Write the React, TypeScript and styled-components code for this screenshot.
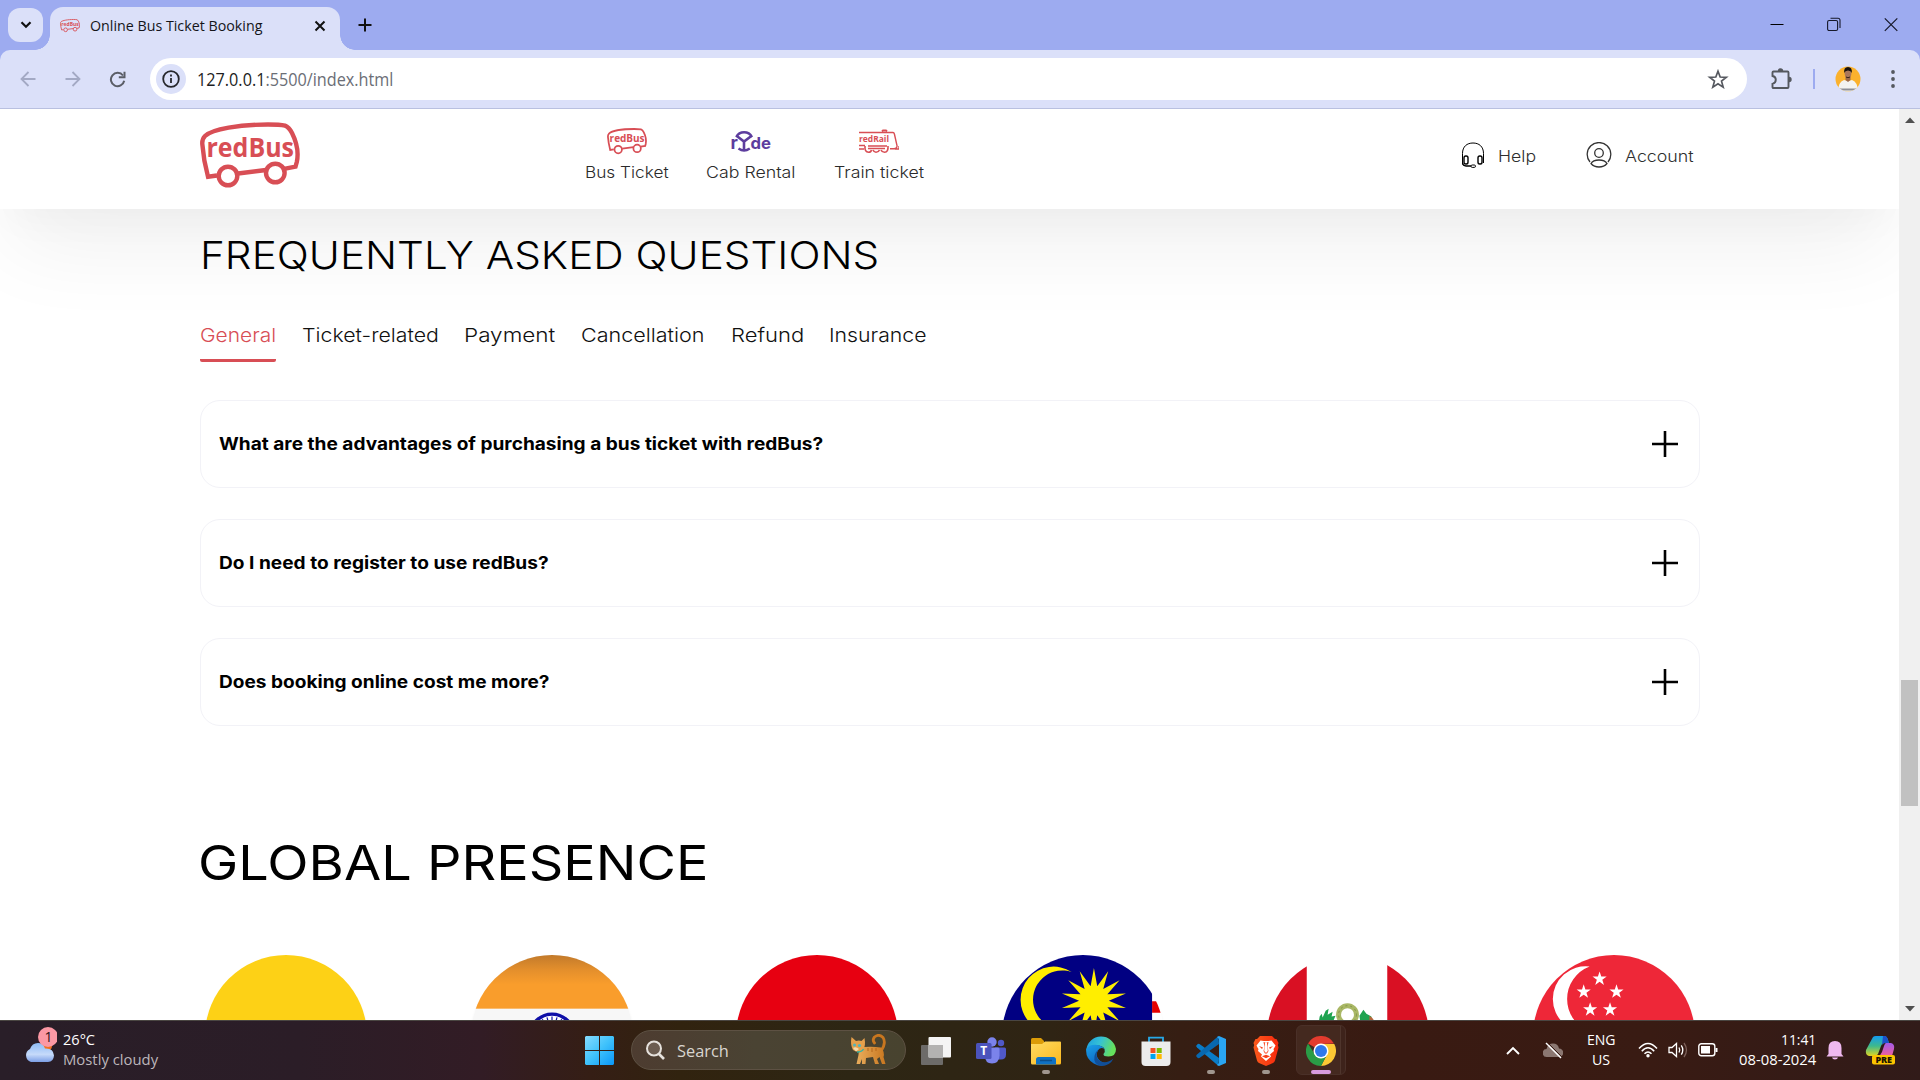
import React, { useLayoutEffect, useRef, useState } from "react";
import styled, { createGlobalStyle } from "styled-components";

const RED = "#d84e55";
const PAGE_FONT = `Inter, "Open Sans", sans-serif`;
const UI_FONT = `"Segoe UI", "Open Sans", "Noto Sans", sans-serif`;

const Global = createGlobalStyle`
  * { box-sizing: border-box; }
  html, body { margin: 0; padding: 0; background: #fff; overflow: hidden; }
  svg { display: block; flex: none; }
`;

/* ---------- fitted text ---------- */

const FitBox = styled.span<{ $w: number }>`
  display: block;
  width: ${(p) => p.$w}px;
  white-space: nowrap;
  flex: none;
`;
const FitInner = styled.span`
  display: inline-block;
  transform-origin: 0 50%;
  vertical-align: top;
`;

function Fit({ w, children }: { w: number; children: React.ReactNode }) {
  const ref = useRef<HTMLSpanElement>(null);
  const [k, setK] = useState(1);
  useLayoutEffect(() => {
    if (ref.current) setK(w / ref.current.offsetWidth);
  }, [w]);
  return (
    <FitBox $w={w}>
      <FitInner ref={ref} style={{ transform: `scaleX(${k})` }}>{children}</FitInner>
    </FitBox>
  );
}

/* ---------- window ---------- */

const Screen = styled.div`
  width: 1920px;
  height: 1080px;
  overflow: hidden;
  display: flex;
  flex-direction: column;
  font-family: ${UI_FONT};
  background: #fff;
`;

const TabStrip = styled.div`
  height: 50px;
  flex: none;
  background: #9dabf0;
  display: flex;
  align-items: flex-start;
  padding-left: 8px;
`;
const TabSearch = styled.div`
  width: 35px;
  height: 34px;
  margin: 8px 7px 0 0;
  border-radius: 12px;
  background: #dbe0f9;
  display: grid;
  place-items: center;
`;
const Tab = styled.div`
  position: relative;
  width: 290px;
  height: 43px;
  margin-top: 7px;
  border-radius: 13px 13px 0 0;
  background: #dbe0f9;
  display: flex;
  align-items: center;
  padding: 0 13px 6px 10px;
  font-size: 15px;
  line-height: 20px;
  color: #14151a;
  &::before, &::after {
    content: "";
    position: absolute;
    bottom: 0;
    width: 15px;
    height: 15px;
  }
  &::before { left: -15px; background: radial-gradient(circle at 0 0, transparent 14.5px, #dbe0f9 15px); }
  &::after { right: -15px; background: radial-gradient(circle at 100% 0, transparent 14.5px, #dbe0f9 15px); }
`;
const TabTitle = styled.div`
  margin: -1px 0 0 10px;
  flex: 1;
`;
const NewTab = styled.div`
  margin: 18px 0 0 18px;
  height: 14px;
`;
const WindowButtons = styled.div`
  margin-left: auto;
  display: flex;
  gap: 43px;
  padding: 17px 22px 0 0;
`;

const ToolbarBack = styled.div`
  height: 59px;
  flex: none;
  background: #9dabf0;
`;
const Toolbar = styled.div`
  height: 59px;
  border-radius: 10px 10px 0 0;
  background: #dbe0f9;
  border-bottom: 1px solid #b9c0e0;
  display: flex;
  align-items: center;
  padding: 0 20px;
`;
const NavButtons = styled.div`
  display: flex;
  gap: 28.5px;
  width: 130px;
  flex: none;
`;
const Omnibox = styled.div`
  width: 1597px;
  height: 42px;
  border-radius: 21px;
  background: #fff;
  display: flex;
  align-items: center;
  padding: 0 18px 0 6px;
`;
const SiteInfo = styled.div`
  width: 30px;
  height: 30px;
  border-radius: 50%;
  background: #dbe0f9;
  display: grid;
  place-items: center;
`;
const Url = styled.div`
  flex: 1;
  margin-left: 11px;
  font-size: 18px;
  line-height: 24px;
  color: #6b6e76;
  b { font-weight: 400; color: #1c1d22; }
`;
const ToolbarRight = styled.div`
  display: flex;
  align-items: center;
  margin-left: 24px;
`;
const Divider = styled.div`
  width: 2px;
  height: 20px;
  background: #9dabf0;
  margin: 0 20px;
`;
const MenuDots = styled.div`
  margin-left: 30px;
`;

/* ---------- page ---------- */

const Viewport = styled.div`
  height: 911px;
  flex: none;
  display: flex;
`;
const Page = styled.div`
  width: 1899px;
  height: 911px;
  overflow: hidden;
  font-family: ${PAGE_FONT};
  color: #000;
`;
const Header = styled.header`
  height: 100px;
  padding: 0 200px;
  background: #fff;
  display: flex;
  align-items: flex-start;
  box-shadow: 0 42px 90px -10px rgba(0, 0, 0, 0.07), 0 20px 40px -10px rgba(0, 0, 0, 0.03);
`;
const LogoSlot = styled.div`
  width: 384.5px;
  padding-top: 13px;
`;
const Services = styled.nav`
  display: flex;
  gap: 37.5px;
  padding-top: 18px;
`;
const Service = styled.div`
  display: flex;
  flex-direction: column;
  align-items: center;
  font-size: 15.6px;
  font-weight: 300;
  line-height: 20px;
  color: #2a2a2a;
`;
const ServiceIcon = styled.div`
  height: 35.5px;
  width: 40px;
  padding-top: 1px;
`;
const Links = styled.div`
  margin-left: auto;
  display: flex;
  padding: 33px 5.5px 0 0;
  gap: 49.5px;
`;
const LinkItem = styled.div`
  display: flex;
  align-items: center;
  gap: 13px;
  font-size: 15.6px;
  font-weight: 300;
  line-height: 26px;
  color: #2e2e2e;
`;
const LinkLabel = styled.div`
  padding-top: 2px;
  height: 26px;
`;

const Faq = styled.section`
  padding: 21px 199px 0 200px;
`;
const FaqTitle = styled.h1`
  margin: 0;
  font-size: 38.5px;
  line-height: 50px;
  font-weight: 300;
`;
const FaqTabs = styled.div`
  display: flex;
  gap: 25.7px;
  margin-top: 44px;
`;
const FaqTab = styled.div<{ $active?: boolean }>`
  height: 38px;
  font-size: 19.3px;
  font-weight: 300;
  line-height: 22px;
  color: ${(p) => (p.$active ? RED : "#111")};
  background: linear-gradient(${RED}, ${RED}) left bottom / ${(p) => (p.$active ? "100% 3px" : "0 0")} no-repeat;
  border-radius: 2px;
`;
const Cards = styled.div`
  display: flex;
  flex-direction: column;
  gap: 31px;
  margin-top: 38px;
`;
const Card = styled.div`
  height: 88px;
  border: 1px solid #f2f2f7;
  border-radius: 20px;
  display: flex;
  align-items: center;
  justify-content: space-between;
  padding: 0 21px 0 18px;
  font-size: 17.3px;
  font-weight: 650;
  line-height: 24px;
`;
const Presence = styled.section`
  padding: 112px 199px 0 200px;
`;
const PresenceTitle = styled.h2`
  margin: 0 0 0 -2px;
  font-size: 48.5px;
  line-height: 50px;
  font-weight: 420;
`;
const Flags = styled.div`
  display: flex;
  justify-content: space-between;
  margin-top: 67px;
  padding: 0 5px;
`;

const ScrollTrack = styled.div`
  width: 21px;
  height: 911px;
  background: #f0f0f0;
  display: flex;
  flex-direction: column;
  align-items: center;
  padding: 8px 0 8px;
`;
const ScrollThumb = styled.div`
  width: 17px;
  height: 126px;
  margin: 557px 0 auto;
  background: #c1c1c1;
`;

/* ---------- taskbar ---------- */

const Taskbar = styled.footer`
  height: 60px;
  flex: none;
  border-top: 1px solid #4a4642;
  background: linear-gradient(90deg, #291e28 0, #2b1d27 300px, #321c25 480px, #351e15 590px, #31230f 680px, #2d2614 850px, #2f2414 1050px, #361e13 1180px, #391a12 1400px, #391b13 1650px, #311b19 1920px);
  display: flex;
  color: #fff;
  font-family: ${UI_FONT};
`;
const Weather = styled.div`
  width: 585px;
  padding: 3px 0 0 23px;
  display: flex;
  gap: 6px;
  font-size: 15px;
  line-height: 20px;
`;
const WeatherText = styled.div`
  padding-top: 5px;
  div:last-child { color: #bdb6bb; }
`;
const StartSlot = styled.div`
  width: 46px;
  padding-top: 15px;
`;
const SearchBox = styled.div`
  width: 275px;
  height: 40px;
  margin: 9px 2.5px 0 0;
  border-radius: 20px;
  border: 1px solid #5d5143;
  background: linear-gradient(90deg, #4d3c30, #4a4333 45%, #48432f);
  display: flex;
  align-items: center;
  padding: 0 19px 0 13px;
  font-size: 17px;
  line-height: 22px;
  color: #d9d5cf;
`;
const SearchLabel = styled.div`
  flex: 1;
  margin-left: 12px;
  padding-top: 1px;
`;
const Apps = styled.div`
  display: flex;
`;
const AppCell = styled.div<{ $active?: boolean }>`
  width: 50px;
  height: 50px;
  margin: 4px 2.5px 0;
  padding-top: 10px;
  border-radius: 6px;
  border: 1px solid ${(p) => (p.$active ? "#4a3028" : "transparent")};
  background: ${(p) => (p.$active ? "linear-gradient(90deg, #44291f 43px, #4f352c 43px, #4f352c 44px, #3e231b 44px)" : "transparent")};
  display: flex;
  flex-direction: column;
  align-items: center;
`;
const Dot = styled.div<{ $active?: boolean }>`
  width: ${(p) => (p.$active ? 20 : 8)}px;
  height: 4px;
  margin-top: 4px;
  border-radius: 2px;
  background: ${(p) => (p.$active ? "#d89bdd" : "#a0968e")};
`;
const Tray = styled.div`
  margin-left: auto;
  display: grid;
  grid-template-columns: 48px 32px 64px 30px 29px 32px 92px 38px 52px 14px;
  align-items: center;
  justify-items: center;
  font-size: 15px;
  line-height: 20px;
  height: 58px;
`;
const Stack = styled.div`
  display: flex;
  flex-direction: column;
  align-items: center;
  margin-top: -2px;
`;
const Clock = styled.div`
  display: flex;
  flex-direction: column;
  align-items: flex-end;
  justify-self: end;
  margin-top: -2px;
`;

/* ---------- drawings ---------- */

const BusSvg = styled.svg`
  overflow: visible;
`;

const BusLogo = ({ width }: { width: number }) => (
  <BusSvg width={width} height={width * 0.66} viewBox="0 0 100 66" fill="none" stroke={RED} strokeWidth="4.4">
    <path d="M17 53.5 L8 54.8 Q3.5 38 2.3 22 Q2 17 5 14 C12 7 40 2.5 68 2.5 Q80 2.5 85 3.6 Q89 5 92 11 C97.500 22 98.500 32 96.800 40 L95.500 44.700 L84 46.800" />
    <path d="M38 51.500 L66 48" />
    <circle cx="28" cy="54" r="9.300" />
    <circle cx="75.300" cy="51" r="9.300" />
    <text x="6.500" y="35.200" fontSize="27.500" fontWeight="700" fill={RED} stroke="none" textLength="87.500" lengthAdjust="spacingAndGlyphs" fontFamily="Open Sans, sans-serif">redBus</text>
  </BusSvg>
);

const RydeLogo = () => (
  <svg width="40" height="26" viewBox="0 -3 40 26" fill="none" stroke="#5d3d9e" strokeWidth="2.400">
    <text x="-0.500" y="18" fontSize="18" fontWeight="700" fill="#5d3d9e" stroke="none" fontFamily="Inter, sans-serif">r</text>
    <path d="M5.200 6 A9 9 0 0 1 21 6" />
    <path d="M5.500 4.800 L13 10.500 L20.700 4.800 M13 10 V19" strokeWidth="2.600" />
    <path d="M7.500 17.500 Q13 21.500 18.800 17.500" />
    <text x="19.500" y="18" fontSize="16" fontWeight="700" fill="#5d3d9e" stroke="none" fontFamily="Inter, sans-serif" textLength="20.500" lengthAdjust="spacingAndGlyphs">de</text>
  </svg>
);

const RailLogo = () => (
  <svg width="40" height="26" viewBox="0 -2 40 26" fill="none" stroke={RED} strokeWidth="1.400">
    <path d="M0 2.500 H34 Q35 2.500 35.400 4 L38 15.500 Q38.300 18.500 35 18.800 H31 M40 16 V19 H36" />
    <path d="M23 1.500 L24 .5 H27 L28 1.500" strokeWidth="1.800" />
    <text x="0" y="12" fontSize="8" fontWeight="700" fill={RED} stroke="none" textLength="30" lengthAdjust="spacingAndGlyphs" fontFamily="Open Sans, sans-serif">redRail</text>
    <path d="M0 15.500 H6 M9 16 H28 M0 19 H5 M9 18.500 H26" />
    <path d="M6 16 Q5.500 22.300 9.500 22.300 Q12 22.300 12.500 20 M14 20 Q15 22.300 17 22.300 Q19.500 22.300 20.500 20 M22 20 Q23 22.300 25.500 22.300 Q29.500 22 29 16" strokeWidth="1.600" />
  </svg>
);

const HelpIcon = () => (
  <svg width="24" height="26" viewBox="0 0 24 26" fill="none" stroke="#000" strokeWidth="1">
    <path d="M1.500 22.500 V11.500 C1.500 4.500 6 1 12 1 C18 1 22.500 4.500 22.500 11.500 V21" />
    <rect x="3" y="14" width="4" height="8" rx="1.800" strokeWidth="1.400" />
    <rect x="17" y="14" width="4" height="8" rx="1.800" strokeWidth="1.400" />
    <path d="M1.500 21 Q2 24 5 24 H10" strokeWidth="1.300" />
    <rect x="10" y="23" width="4.500" height="2.400" rx="1.200" />
  </svg>
);

const AccountIcon = () => (
  <svg width="26" height="26" viewBox="0 0 26 26" fill="none" stroke="#333" strokeWidth="1.300">
    <path d="M4 20 A11.800 11.800 0 1 1 22 20" />
    <circle cx="13" cy="11" r="4.300" />
    <path d="M5 21.500 Q7 18 13 18 Q19 18 21 21.500 Q18 25 13 25 Q8 25 5 21.500Z" />
  </svg>
);

const PlusIcon = () => (
  <svg width="26" height="26" viewBox="0 0 26 26" stroke="#000" strokeWidth="2.600"><path d="M13 0V26M0 13H26" /></svg>
);

const star = (cx: number, cy: number, R: number, r: number, n: number) =>
  Array.from({ length: n * 2 }, (_, i) => {
    const a = (Math.PI * i) / n - Math.PI / 2;
    const q = i % 2 ? r : R;
    return `${(cx + q * Math.cos(a)).toFixed(2)},${(cy + q * Math.sin(a)).toFixed(2)}`;
  }).join(" ");

const FlagSvg = styled.svg`
  width: 162px;
  height: 162px;
  border-radius: 50%;
  overflow: hidden;
  box-shadow: 0 4px 3px rgba(0, 0, 0, 0.1);
`;

const FlagArt: React.ReactNode[] = [
  <>
    <rect width="163" height="82" fill="#fdd116" />
    <rect y="82" width="163" height="41" fill="#003893" />
    <rect y="123" width="163" height="40" fill="#ce1126" />
  </>,
  <>
    <defs>
      <linearGradient id="saffron" x2="0" y2="1">
        <stop offset="0" stopColor="#c27a2b" />
        <stop offset=".28" stopColor="#e48f2c" />
        <stop offset=".55" stopColor="#f99d2c" />
      </linearGradient>
    </defs>
    <rect width="163" height="163" fill="#f7f7f7" />
    <rect width="163" height="54" fill="url(#saffron)" />
    <rect y="109" width="163" height="54" fill="#128807" />
    <circle cx="81.500" cy="81.500" r="22" fill="#fff" stroke="#1010a8" strokeWidth="3.500" />
    {Array.from({ length: 24 }, (_, i) => (
      <path key={i} d="M81.500 81.500V62" stroke="#1010a8" strokeWidth="1.200" transform={`rotate(${i * 15} 81.500 81.500)`} />
    ))}
  </>,
  <>
    <rect width="163" height="82" fill="#e70011" />
    <rect y="82" width="163" height="81" fill="#fff" />
  </>,
  <>
    <rect width="163" height="163" fill="#fff" />
    <path d="M151 46.500h13v11.500h-13z" fill="#e60000" />
    <rect width="151" height="93" fill="#010082" />
    <path d="M70 17 A33.300 33.300 0 1 0 70 73 A29.500 29.500 0 1 1 70 17Z" fill="#ffee00" />
    <polygon points={star(92.500, 46, 33, 15, 14)} fill="#ffee00" />
  </>,
  <>
    <rect width="163" height="163" fill="#fff" />
    <rect width="40" height="163" fill="#d91023" />
    <rect x="121" width="42" height="163" fill="#d91023" />
    <circle cx="81" cy="60" r="9" fill="none" stroke="#a9b765" strokeWidth="5" />
    <circle cx="81" cy="60" r="9" fill="none" stroke="#7f9146" strokeWidth="1" strokeDasharray="2 3" />
    <path d="M52 68l1-6 2-3 1 4 3-7 3-2-1 6 5-3-1 5 4-1-3 7z M94 68l-1-7 4-6 3 4 5 3 1 6z" fill="#1fa350" />
    <path d="M103 61q5 3 5 7h-5z M73 68h16v4H73z" fill="#b5653c" />
  </>,
  <>
    <rect width="163" height="82" fill="#ee2738" />
    <rect y="82" width="163" height="81" fill="#fff" />
    <path d="M57 11.500 A33 33 0 1 0 57 77 A35 35 0 0 1 57 11.500Z" fill="#fff" />
    {[[67, 24], [51, 37], [84, 37], [57.500, 55], [77.500, 55]].map(([x, y]) => (
      <polygon key={`${x}-${y}`} points={star(x, y, 7.500, 2.900, 5)} fill="#fff" />
    ))}
  </>,
];

const Avatar = () => (
  <svg width="26" height="26" viewBox="0 0 26 26">
    <defs><clipPath id="av"><circle cx="13" cy="13" r="12.500" /></clipPath></defs>
    <g clipPath="url(#av)">
      <rect width="26" height="26" fill="#fbb12d" />
      <path d="M3 26 Q3 16 9 14 L13 15 L17 14 Q23 16 23 26Z" fill="#f3f3f1" />
      <path d="M10.500 10h5v4l-2.500 2-2.500-2z" fill="#9b6a4a" />
      <ellipse cx="13" cy="7.500" rx="3.400" ry="4.800" fill="#a9775a" />
      <path d="M9.200 7Q8.500 1 13 1Q17.500 1 16.800 7Q16 4.500 13 4.500Q10 4.500 9.200 7Z" fill="#17120f" />
      <path d="M11 10.200Q13 12.500 15 10.200L14.500 12h-3z" fill="#2c1b14" />
      <path d="M4 22.500h18v2H5z" fill="#8d8f97" />
    </g>
  </svg>
);

const Cat = () => (
  <svg width="36" height="32" viewBox="0 0 36 32">
    <defs><linearGradient id="cat" x2="1" y2="0"><stop offset="0" stopColor="#e9ad5c" /><stop offset="1" stopColor="#c8761f" /></linearGradient></defs>
    <path d="M31 17 Q36.500 9 33 3.500 Q29 -.5 24.500 3 Q22 6 24.500 9" fill="none" stroke="#c8761f" strokeWidth="2.800" strokeLinecap="round" />
    <path d="M9 14 Q18 12 31 13.500 Q35 18 33.500 23 L35.500 30 H32 L29.500 23 L27 25 L29 30 H25 L23 23 L16 24 L15.500 30 H12 L12 25 L10 30 H6.500 L8.500 21Z" fill="url(#cat)" />
    <path d="M1.500 3 L6 7 Q9 6 11.500 7 L14.500 4 Q16 12 13 16 Q8 19.500 3 16 Q0 11 1.500 3Z" fill="#e5a04c" />
    <path d="M3 14 Q6 12 9 15 L6 17.500Z" fill="#f6dcae" />
    <circle cx="4.500" cy="11" r="1.500" fill="#4fb5bf" /><circle cx="9.500" cy="11.500" r="1.600" fill="#4fb5bf" />
    <path d="M7 18 Q12 18 13.500 15" stroke="#2fb3a5" strokeWidth="1.500" fill="none" />
    <path d="M18 14v3M22 14v4M26 14v3" stroke="#b5661a" />
  </svg>
);

const S = ({ children }: { children: React.ReactNode }) => <svg width="30" height="30" viewBox="0 0 30 30">{children}</svg>;

const StartIcon = () => (
  <svg width="29" height="29" viewBox="0 0 29 29">
    <defs><linearGradient id="win" x2="1" y2="1"><stop offset="0" stopColor="#86dcff" /><stop offset=".5" stopColor="#3fc2fb" /><stop offset="1" stopColor="#0a96f8" /></linearGradient></defs>
    <path d="M1 0h13v14H0V1zM15 0h13l1 1v13H15zM0 15h14v14H1l-1-1zM15 15h14v13l-1 1H15z" fill="url(#win)" />
  </svg>
);

const TaskView = () => (
  <S>
    <rect x="0" y="9" width="22" height="20" rx="1" fill="#6d6b69" />
    <rect x="7.500" y="1" width="22.500" height="20.500" rx="1" fill="#f4f4f4" />
    <path d="M7.500 9H22v12.500H7.500z" fill="#b3b2b1" />
  </S>
);
const Teams = () => (
  <S>
    <circle cx="25" cy="7" r="3.200" fill="#5059c9" />
    <path d="M19 11.500h9.500q1.500 0 1.500 1.500v5.500q0 5-5 5h-5z" fill="#5059c9" />
    <circle cx="16" cy="6" r="4.700" fill="#7b83eb" />
    <path d="M9 11.500h13q1.500 0 1.500 1.500v6.500Q23 27.500 16 27.500T9 20z" fill="#7b83eb" />
    <rect x="0" y="7" width="15.500" height="16" rx="1.500" fill="#4b53bc" />
    <text x="7.700" y="19" fontSize="12" fontWeight="700" fill="#fff" textAnchor="middle" fontFamily="Open Sans, sans-serif">T</text>
  </S>
);
const Folder = () => (
  <S>
    <path d="M0 3.500Q0 2 1.500 2H10l3 3v5H0z" fill="#dc9c08" />
    <defs><linearGradient id="fold" x2="1" y2="1"><stop offset="0" stopColor="#ffdb63" /><stop offset="1" stopColor="#fcb91e" /></linearGradient></defs>
    <path d="M0 8h11l3-2.500h15q1 0 1 1V27q0 1.500-1.500 1.500h-27Q0 28.500 0 27z" fill="url(#fold)" />
    <path d="M5 28.500V23.500Q5 21 7.500 21h15Q25 21 25 23.500v5z" fill="#0f72c4" />
    <path d="M9 24.500h12" stroke="#0b4f8d" strokeWidth="1.500" />
  </S>
);
const Edge = () => (
  <S>
    <defs>
      <linearGradient id="eg" x2="1" y2=".3"><stop offset="0" stopColor="#1b9de2" /><stop offset=".5" stopColor="#35c1d5" /><stop offset="1" stopColor="#66e05c" /></linearGradient>
      <linearGradient id="eb" x2=".6" y2="1"><stop offset="0" stopColor="#1aa0e8" /><stop offset="1" stopColor="#0c62c0" /></linearGradient>
    </defs>
    <path d="M.3 14A15 15 0 0 1 30 13q0 7.500-7.500 7.500Q17 20.500 17.500 18q2-2 1-5Q17 9.500 11 9.500 4 9.500.3 14Z" fill="url(#eg)" />
    <path d="M.2 13Q3 8.500 9.500 8.700 16 9 18.500 13 14 10.500 11.500 15 9 21 15 25.500 19 28 24 26.500A15 15 0 0 1 .2 13Z" fill="url(#eb)" />
    <path d="M12.300 14Q8 21 14 25q6 3.500 13.500-2.500Q24 30 15 30 7 28 8.500 20q1-4.500 3.800-6Z" fill="#114f98" />
  </S>
);
const Store = () => (
  <S>
    <path d="M8 7V1.700h14V7" fill="none" stroke="#27a9e8" strokeWidth="1.800" />
    <path d="M.5 5.500h29V26q0 4-4 4h-21q-4 0-4-4z" fill="#ececec" />
    <path d="M9.500 12h5v5h-5z" fill="#f25022" /><path d="M15.700 12h5v5h-5z" fill="#7fba00" />
    <path d="M9.500 18h5v5h-5z" fill="#00a4ef" /><path d="M15.700 18h5v5h-5z" fill="#ffb900" />
  </S>
);
const Code = () => (
  <S>
    <path d="M22.500 30 L1 11.500 0 10 2 7.800 3.500 8 23 22z" fill="#0a7cc7" />
    <path d="M22.500 0 L1 18.500 0 20 2 22.200 3.500 22 23 8z" fill="#0868b0" />
    <path d="M21 1 L23 0 30 3V27L23 30 21 29 23 27V3z" fill="#2aa5f2" />
  </S>
);
const Brave = () => (
  <S>
    <defs><linearGradient id="br" x2="1" y2="0"><stop offset="0" stopColor="#fb5a1c" /><stop offset="1" stopColor="#f8290d" /></linearGradient></defs>
    <path d="M9 0h12l3 3h1.500l2 4-.7 2 .7 2.500-3.500 13q-.5 1.500-2 2.500L15 30l-7-3q-1.500-1-2-2.500L2.500 11.500 3.200 9l-.7-2 2-4H6z" fill="url(#br)" />
    <path d="M9.500 4.500l3 .5h5l3-.5 4 5-1 2-1 1.500.5 2-4 3.500 1 2-5 4.500-5-4.500 1-2-4-3.500.5-2-1-1.500-1-2z" fill="#fff" />
    <path d="M8 10l4 1.500-1 1.500zM22 10l-4 1.500 1 1.500zM12.500 6l1 5-1 4 1.500 2.500h2l1.500-2.500-1-4 1-5-2.500.7zM11 20.300l4-1.500 4 1.500-4 2z" fill="#f9401a" />
    <path d="M14 6.500h2l.8 8.500-1.800 2-1.800-2z" fill="#fff" />
  </S>
);
const Chrome = () => (
  <S>
    <path d="M15 15L2 7.500A15 15 0 0 1 28 7.500L15 8z" fill="#e33b2e" />
    <path d="M15 8H28.300A15 15 0 0 1 15 30L21 18.500z" fill="#fcc934" />
    <path d="M2 7.500L8.900 18.500 15 22 21 18.500 15 30A15 15 0 0 1 2 7.500Z" fill="#2a9c46" />
    <circle cx="15" cy="15" r="7.500" fill="#fff" />
    <circle cx="15" cy="15" r="6" fill="#2f78ea" />
  </S>
);

const WeatherIcon = () => (
  <svg width="34" height="40" viewBox="0 0 34 40">
    <defs><linearGradient id="cl" x2="0" y2="1"><stop offset="0" stopColor="#8ebcf5" /><stop offset=".6" stopColor="#c6dafa" /><stop offset="1" stopColor="#7c9fe6" /></linearGradient></defs>
    <circle cx="23" cy="22" r="6" fill="#f36f21" />
    <path d="M8 38A7 7 0 0 1 7 25Q9 19 15 19Q20 19 22 24.500Q30.500 24 31 31.500Q30.500 38 25 38Z" fill="url(#cl)" />
    <circle cx="25" cy="13" r="10" fill="#fc98a4" />
    <text x="25.500" y="18" fontSize="14" textAnchor="middle" fill="#2c1216" fontFamily="Open Sans, sans-serif">1</text>
  </svg>
);

const Copilot = () => (
  <svg width="30" height="30" viewBox="0 0 30 30">
    <defs>
      <linearGradient id="c1" x2="0" y2="1"><stop offset="0" stopColor="#149bf0" /><stop offset=".5" stopColor="#3db98c" /><stop offset="1" stopColor="#e0d522" /></linearGradient>
      <linearGradient id="c2" x2="0" y2="1"><stop offset="0" stopColor="#a25bea" /><stop offset="1" stopColor="#f0609a" /></linearGradient>
    </defs>
    <path d="M8 2Q9 1 11 1H19Q22 1 23 5L24 8H20Q17 8 16 11L13 19Q12 21 9 21H4Q0 20 1 15Z" fill="url(#c1)" />
    <path d="M18 1H20Q22 1 23 5L24 8H20Q18 8 17 10Z" fill="#1b50c9" />
    <path d="M21 8H26Q30 9 29 14L27 21H13Q16 20 17 17L19 11Q20 8 21 8Z" fill="url(#c2)" />
    <rect x="7" y="20" width="23" height="9.500" rx="2" fill="#fcc400" />
    <text x="10.500" y="28" fontSize="9" fontWeight="800" fill="#1b1500" textLength="16.500" fontFamily="Open Sans, sans-serif">PRE</text>
  </svg>
);

/* ---------- data ---------- */

const faqTabs: [string, number][] = [["General", 76], ["Ticket-related", 137], ["Payment", 91], ["Cancellation", 124], ["Refund", 73], ["Insurance", 98]];
const questions: [string, number][] = [
  ["What are the advantages of purchasing a bus ticket with redBus?", 604],
  ["Do I need to register to use redBus?", 329.500],
  ["Does booking online cost me more?", 331],
];
const apps = [TaskView, Teams, Folder, Edge, Store, Code, Brave, Chrome];

export default function App() {
  return (
    <Screen>
      <Global />
      <TabStrip>
        <TabSearch>
          <svg width="12" height="8" viewBox="0 0 12 8" fill="none" stroke="#111" strokeWidth="2.200"><path d="M1.500 1.200L6 5.700L10.500 1.200" /></svg>
        </TabSearch>
        <Tab>
          <BusLogo width={20} />
          <TabTitle><Fit w={172}>Online Bus Ticket Booking</Fit></TabTitle>
          <svg width="14" height="14" viewBox="0 0 14 14" stroke="#111" strokeWidth="2"><path d="M2.500 2.500l9 9M11.500 2.500l-9 9" /></svg>
        </Tab>
        <NewTab><svg width="14" height="14" viewBox="0 0 14 14" stroke="#111" strokeWidth="2"><path d="M7 .5v13M.5 7h13" /></svg></NewTab>
        <WindowButtons>
          <svg width="14" height="15" viewBox="0 0 14 15" stroke="#000"><path d="M.5 7.500h13" /></svg>
          <svg width="14" height="15" viewBox="0 0 14 15" fill="none" stroke="#16182a" strokeWidth="1.100"><rect x=".6" y="3.500" width="10" height="10" rx="1.500" /><path d="M3.500 1.200h7.500q2 0 2 2V11" /></svg>
          <svg width="14" height="15" viewBox="0 0 14 15" stroke="#16182a" strokeWidth="1.200"><path d="M.8 1.300l12.500 12.500M13.300 1.300L.8 13.800" /></svg>
        </WindowButtons>
      </TabStrip>
      <ToolbarBack>
        <Toolbar>
          <NavButtons>
            <svg width="16" height="16" viewBox="0 0 16 16" fill="none" stroke="#a3a9c4" strokeWidth="1.800"><path d="M15.500 8H2M8.500 1L1.500 8L8.500 15" /></svg>
            <svg width="16" height="16" viewBox="0 0 16 16" fill="none" stroke="#a3a9c4" strokeWidth="1.800"><path d="M.5 8H14M7.500 1L14.500 8L7.500 15" /></svg>
            <svg width="17" height="17" viewBox="0 0 17 17" fill="none" stroke="#5a5d66" strokeWidth="2"><path d="M14 4.500A6.700 6.700 0 1 0 15.200 9.800" /><path d="M15.500 .8V6.300H9.800" /></svg>
          </NavButtons>
          <Omnibox>
            <SiteInfo>
              <svg width="18" height="18" viewBox="0 0 18 18" fill="none" stroke="#26272c" strokeWidth="1.800"><circle cx="9" cy="9" r="7.800" /><path d="M9 8v5M9 4.600v1.800" /></svg>
            </SiteInfo>
            <Url><Fit w={196.500}><b>127.0.0.1</b>:5500/index.html</Fit></Url>
            <svg width="22" height="20" viewBox="0 0 22 20" fill="none" stroke="#55585f" strokeWidth="1.700"><polygon points={star(11, 11, 8.800, 3.700, 5)} /></svg>
          </Omnibox>
          <ToolbarRight>
            <svg width="22" height="22" viewBox="0 0 22 22" fill="none" stroke="#55585f" strokeWidth="1.900">
              <path d="M1.500 4.500Q1.500 3.500 2.500 3.500H16.500Q17.500 3.500 17.500 4.500V19Q17.500 20 16.500 20H2.500Q1.500 20 1.500 19V15.800Q4.800 15 4.800 11.800T1.500 8Z" />
              <path d="M6.800 3a2.700 2.700 0 0 1 5.400 0zM18 8.800a2.700 2.700 0 0 1 0 5.400z" fill="#55585f" stroke="none" />
            </svg>
            <Divider />
            <Avatar />
            <MenuDots>
              <svg width="4" height="20" viewBox="0 0 4 20" fill="#55585f"><circle cx="2" cy="3" r="1.900" /><circle cx="2" cy="10" r="1.900" /><circle cx="2" cy="17" r="1.900" /></svg>
            </MenuDots>
          </ToolbarRight>
        </Toolbar>
      </ToolbarBack>

      <Viewport>
        <Page>
          <Header>
            <LogoSlot><BusLogo width={100} /></LogoSlot>
            <Services>
              <Service><ServiceIcon><BusLogo width={40} /></ServiceIcon><Fit w={84}>Bus Ticket</Fit></Service>
              <Service><ServiceIcon><RydeLogo /></ServiceIcon><Fit w={90}>Cab Rental</Fit></Service>
              <Service><ServiceIcon><RailLogo /></ServiceIcon><Fit w={90}>Train ticket</Fit></Service>
            </Services>
            <Links>
              <LinkItem><HelpIcon /><LinkLabel><Fit w={38.500}>Help</Fit></LinkLabel></LinkItem>
              <LinkItem><AccountIcon /><LinkLabel><Fit w={68.500}>Account</Fit></LinkLabel></LinkItem>
            </Links>
          </Header>
          <Faq>
            <FaqTitle><Fit w={679}>FREQUENTLY ASKED QUESTIONS</Fit></FaqTitle>
            <FaqTabs>
              {faqTabs.map(([t, w], i) => <FaqTab key={t} $active={i === 0}><Fit w={w}>{t}</Fit></FaqTab>)}
            </FaqTabs>
            <Cards>
              {questions.map(([q, w]) => <Card key={q}><Fit w={w}>{q}</Fit><PlusIcon /></Card>)}
            </Cards>
          </Faq>
          <Presence>
            <PresenceTitle><Fit w={510}>GLOBAL PRESENCE</Fit></PresenceTitle>
            <Flags>
              {FlagArt.map((art, i) => <FlagSvg key={i} viewBox="0 0 163 163">{art}</FlagSvg>)}
            </Flags>
          </Presence>
        </Page>
        <ScrollTrack>
          <svg width="10" height="6" viewBox="0 0 10 6" fill="#505050"><path d="M0 6L5 0.500L10 6z" /></svg>
          <ScrollThumb />
          <svg width="10" height="6" viewBox="0 0 10 6" fill="#505050"><path d="M0 0L5 5.500L10 0z" /></svg>
        </ScrollTrack>
      </Viewport>

      <Taskbar>
        <Weather>
          <WeatherIcon />
          <WeatherText><div><Fit w={32}>26°C</Fit></div><div><Fit w={95}>Mostly cloudy</Fit></div></WeatherText>
        </Weather>
        <StartSlot><StartIcon /></StartSlot>
        <SearchBox>
          <svg width="20" height="20" viewBox="0 0 20 20" fill="none" stroke="#e6e2dd" strokeWidth="2"><circle cx="9" cy="8.500" r="7" fill="#6b5c50" /><path d="M13.500 13.500L19 19" strokeWidth="2.600" /></svg>
          <SearchLabel><Fit w={52}>Search</Fit></SearchLabel>
          <Cat />
        </SearchBox>
        <Apps>
          {apps.map((Icon, i) => (
            <AppCell key={i} $active={i === 7}>
              <Icon />
              {[2, 5, 6, 7].includes(i) && <Dot $active={i === 7} />}
            </AppCell>
          ))}
        </Apps>
        <Tray>
          <svg width="14" height="9" viewBox="0 0 14 9" fill="none" stroke="#fff" strokeWidth="1.900"><path d="M1 8L7 2L13 8" /></svg>
          <svg width="20" height="17" viewBox="0 0 20 17"><path d="M4 15A4 4 0 0 1 3.500 7Q5 1.500 10 1.500T16 6.500A4.200 4.200 0 0 1 16 15Z" fill="#8b7771" /><path d="M3 1L18 16" stroke="#fff" strokeWidth="1.400" /><path d="M4 0L19 15" stroke="#391a12" strokeWidth="1" /></svg>
          <Stack><Fit w={29}>ENG</Fit><Fit w={18}>US</Fit></Stack>
          <svg width="20" height="16" viewBox="0 0 20 16" fill="none" stroke="#fff" strokeWidth="1.500"><path d="M1 6.500Q10-3.500 19 6.500M3.800 9.200Q10 2.300 16.200 9.200M6.500 11.800Q10 8 13.500 11.800" /><circle cx="10" cy="13.800" r="1.700" fill="#fff" stroke="none" /></svg>
          <svg width="20" height="16" viewBox="0 0 20 16" fill="none" stroke="#fff" strokeWidth="1.300"><path d="M1 5.500H4L8.500 1.500V14.500L4 10.500H1Z" /><path d="M11 5.500Q12.500 8 11 10.500M13.300 3.300Q16.300 8 13.300 12.700" /><path d="M16 1Q21 8 16 15" stroke="#7b5f58" /></svg>
          <svg width="20" height="14" viewBox="0 0 20 14" fill="none" stroke="#fff" strokeWidth="1.400"><rect x=".8" y=".8" width="16" height="12" rx="2.500" /><rect x="3" y="3" width="9" height="7.500" fill="#fff" stroke="none" /><path d="M18.500 5v4" strokeWidth="2" /></svg>
          <Clock><Fit w={35}>11:41</Fit><Fit w={77}>08-08-2024</Fit></Clock>
          <svg width="18" height="20" viewBox="0 0 18 20" fill="#efb8f0"><path d="M2.500 14V8Q2.500 1 9 1T15.500 8V14L17.500 16.500H.5ZM6 17.500h6Q11.500 19.500 9 19.500T6 17.500Z" /></svg>
          <Copilot />
        </Tray>
      </Taskbar>
    </Screen>
  );
}
